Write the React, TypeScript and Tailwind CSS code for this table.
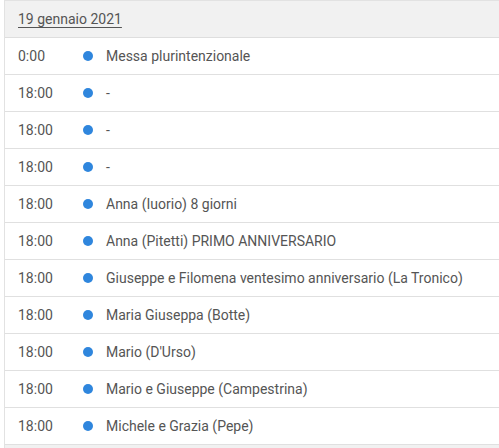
const rows: [string, string][] = [
  ['0:00', 'Messa plurintenzionale'],
  ['18:00', '-'],
  ['18:00', '-'],
  ['18:00', '-'],
  ['18:00', 'Anna (Iuorio) 8 giorni'],
  ['18:00', 'Anna (Pitetti) PRIMO ANNIVERSARIO'],
  ['18:00', 'Giuseppe e Filomena ventesimo anniversario (La Tronico)'],
  ['18:00', 'Maria Giuseppa (Botte)'],
  ['18:00', 'Mario (D\'Urso)'],
  ['18:00', 'Mario e Giuseppe (Campestrina)'],
  ['18:00', 'Michele e Grazia (Pepe)'],
];

export default function App() {
  return (
    <div className="w-[499px] h-[448px] overflow-hidden bg-white text-[14px] text-[#555] font-['Roboto',sans-serif]">
      <div className="ml-[4px] border-l border-t border-[#e2e2e2]">
        <div className="h-[37px] flex items-center pl-[13px] bg-[#f1f1f1] border-b border-[#dedede]">
          <span className="underline underline-offset-[3px]">19 gennaio 2021</span>
        </div>
        {rows.map(([time, label], i) => (
          <div key={i} className="h-[37px] flex items-center border-b border-[#e0e0e0]">
            <span className="w-[64px] pl-[13px]">{time}</span>
            <span className="w-[10px] h-[10px] rounded-full bg-[#2f86dd] ml-[14px]" />
            <span className="ml-[13px]">{label}</span>
          </div>
        ))}
        <div className="h-[10px] bg-[#f1f1f1]" />
      </div>
    </div>
  );
}
